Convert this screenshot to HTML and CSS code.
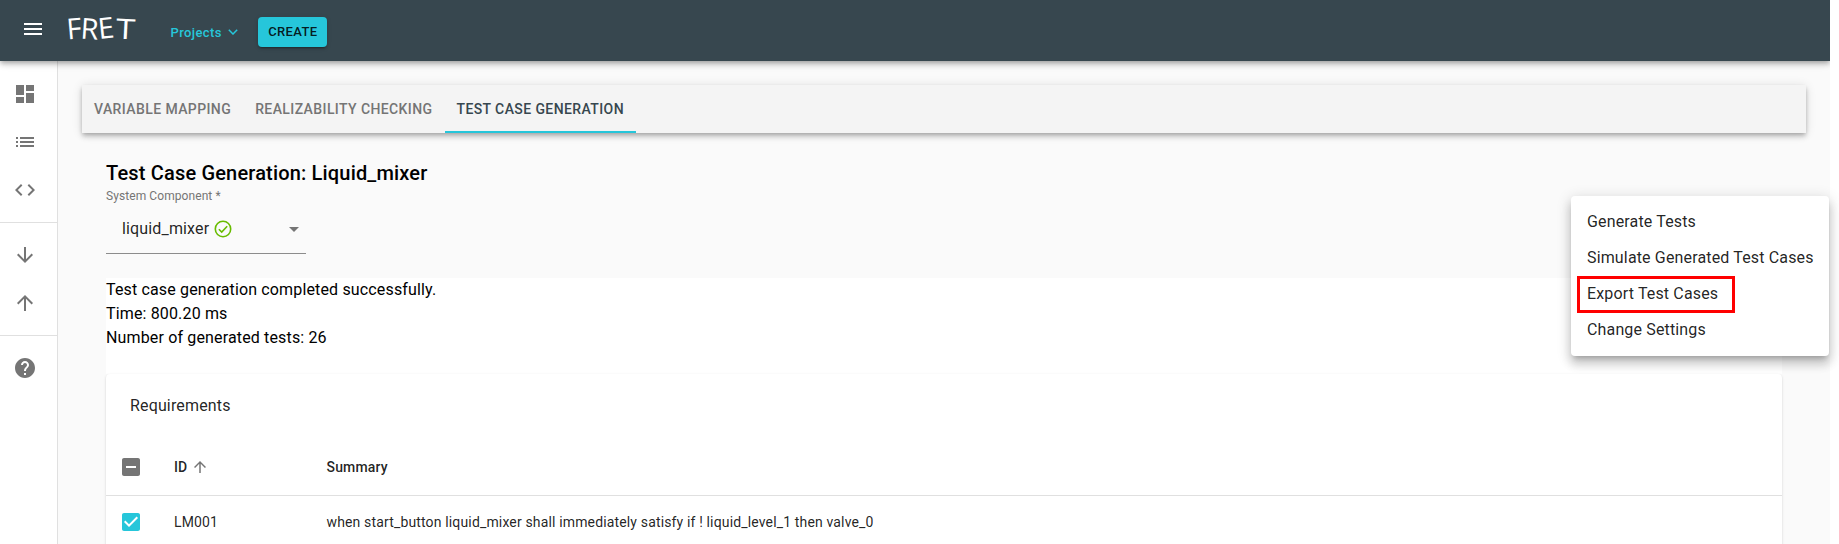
FILE: index.html
```html
<!DOCTYPE html>
<html lang="en">
<head>
<meta charset="utf-8">
<title>FRET</title>
<link rel="stylesheet" href="styles.css">
</head>
<body>
<div class="app">
  <header class="appbar">
    <svg class="icon menu-icon" viewBox="0 0 24 24"><path d="M3 18h18v-2H3v2zm0-5h18v-2H3v2zm0-7v2h18V6H3z"/></svg>
    <svg class="logo" viewBox="0 0 72 36"><text><tspan x="1.500" y="28.500" rotate="-5">F</tspan><tspan x="14" y="27.500" rotate="4">R</tspan><tspan x="33" y="28" rotate="-6">E</tspan></text><text class="wide" transform="translate(49.500 27.500) rotate(3) scale(1.250 1)">T</text></svg>
    <div class="projects">Projects<svg class="chevron" viewBox="0 0 10 6"><path d="M.8.8 5 5 9.200.8"/></svg></div>
    <button class="create">CREATE</button>
  </header>
  <div class="body">
    <nav class="sidebar">
      <div class="group">
        <svg class="icon" viewBox="0 0 24 24"><path d="M3 13h8V3H3v10zm0 8h8v-6H3v6zm10 0h8V11h-8v10zm0-18v6h8V3h-8z"/></svg>
        <svg class="icon" viewBox="0 0 24 24"><path d="M3 13h2v-2H3v2zm0 4h2v-2H3v2zm0-8h2V7H3v2zm4 4h14v-2H7v2zm0 4h14v-2H7v2zM7 7v2h14V7H7z"/></svg>
        <svg class="icon" viewBox="0 0 24 24"><path d="M9.400 16.600 4.800 12l4.600-4.600L8 6l-6 6 6 6 1.400-1.400zm5.200 0 4.600-4.600-4.600-4.600L16 6l6 6-6 6-1.400-1.400z"/></svg>
      </div>
      <div class="group">
        <svg class="icon" viewBox="0 0 24 24"><path d="m20 12-1.410-1.410L13 16.170V4h-2v12.170l-5.580-5.590L4 12l8 8 8-8z"/></svg>
        <svg class="icon" viewBox="0 0 24 24"><path d="m4 12 1.410 1.410L11 7.830V20h2V7.830l5.580 5.590L20 12l-8-8-8 8z"/></svg>
      </div>
      <div class="group">
        <svg class="icon" viewBox="0 0 24 24"><path d="M12 2C6.480 2 2 6.480 2 12s4.480 10 10 10 10-4.480 10-10S17.520 2 12 2zm1 17h-2v-2h2v2zm2.070-7.750-.9.920C13.450 12.900 13 13.500 13 15h-2v-.5c0-1.100.45-2.100 1.170-2.830l1.240-1.260c.37-.36.59-.86.59-1.410 0-1.100-.9-2-2-2s-2 .9-2 2H8c0-2.210 1.790-4 4-4s4 1.790 4 4c0 .88-.36 1.680-.93 2.250z"/></svg>
      </div>
    </nav>
    <main class="content">
      <div class="tabs">
        <div class="tab">VARIABLE MAPPING</div>
        <div class="tab">REALIZABILITY CHECKING</div>
        <div class="tab active">TEST CASE GENERATION</div>
      </div>
      <section class="panel">
        <h1 class="title">Test Case Generation: Liquid_mixer</h1>
        <div class="label">System Component *</div>
        <div class="select">
          <span>liquid_mixer</span>
          <svg class="ok" viewBox="0 0 18 18"><circle cx="9" cy="9" r="7.700"/><path d="m4.900 9.300 2.800 2.800L13.200 6.300"/></svg>
          <svg class="icon arrow" viewBox="0 0 24 24"><path d="m7 10 5 5 5-5z"/></svg>
        </div>
        <div class="result">
          <div>Test case generation completed successfully.</div>
          <div>Time: 800.20 ms</div>
          <div>Number of generated tests: 26</div>
        </div>
        <div class="card">
          <div class="toolbar">Requirements</div>
          <div class="row head">
            <svg class="icon check" viewBox="0 0 24 24"><path d="M19 3H5c-1.100 0-2 .9-2 2v14c0 1.100.9 2 2 2h14c1.100 0 2-.9 2-2V5c0-1.100-.9-2-2-2zm-2 10H7v-2h10v2z"/></svg>
            <div class="id">ID<svg class="icon sort" viewBox="0 0 24 24"><path d="m4 12 1.410 1.410L11 7.830V20h2V7.830l5.580 5.590L20 12l-8-8-8 8z"/></svg></div>
            <div>Summary</div>
          </div>
          <div class="row">
            <svg class="icon check on" viewBox="0 0 24 24"><path d="M19 3H5c-1.110 0-2 .9-2 2v14c0 1.100.89 2 2 2h14c1.110 0 2-.9 2-2V5c0-1.100-.89-2-2-2zm-9 14-5-5 1.410-1.410L10 14.170l7.590-7.590L19 8l-9 9z"/></svg>
            <div class="id">LM001</div>
            <div>when start_button liquid_mixer shall immediately satisfy if ! liquid_level_1 then valve_0</div>
          </div>
        </div>
      </section>
    </main>
  </div>
</div>
<div class="menu">
  <div class="item">Generate Tests</div>
  <div class="item">Simulate Generated Test Cases</div>
  <div class="item marked">Export Test Cases</div>
  <div class="item">Change Settings</div>
</div>
</body>
</html>
```
FILE: styles.css
```css
*, *::after { box-sizing: border-box; }
body {
  margin: 0;
  height: 544px;
  overflow: hidden;
  background: #fff;
  color: #000;
  font-family: Roboto, "Liberation Sans", sans-serif;
  font-size: 16px;
}
.app {
  width: 1830px;
  height: 544px;
  display: flex;
  flex-direction: column;
  overflow: hidden;
  background: #fafafa;
}
.icon { width: 24px; height: 24px; flex: none; fill: #757575; }
.appbar {
  position: relative;
  z-index: 1;
  flex: none;
  height: 61px;
  display: flex;
  align-items: center;
  padding: 0 21px 0 21px;
  background: #37474f;
  box-shadow: 0 2px 4px -1px rgba(0,0,0,.2), 0 4px 5px rgba(0,0,0,.14), 0 1px 10px rgba(0,0,0,.12);
}
.menu-icon { fill: #fff; margin-top: -3px; }
.logo { width: 72px; height: 36px; margin: -4px 0 0 21px; overflow: visible; }
.logo text { font-family: "Open Sans", sans-serif; font-size: 29px; fill: #fff; }
.logo .wide { font-size: 28px; }
.projects {
  display: flex;
  align-items: center;
  gap: 6px;
  margin-left: 32.500px;
  padding-top: 3px;
  color: #26c6da;
  font-size: 13px;
  font-weight: 500;
  letter-spacing: .4px;
}
.chevron { width: 10px; height: 6px; fill: none; stroke: #26c6da; stroke-width: 1.5; }
.create {
  width: 69px;
  height: 30px;
  margin: 2px 0 0 20.500px;
  padding: 0;
  border: 0;
  border-radius: 4px;
  background: #26c6da;
  color: rgba(0,0,0,.87);
  font: 500 13px Roboto, sans-serif;
  letter-spacing: .37px;
  box-shadow: 0 3px 1px -2px rgba(0,0,0,.2), 0 2px 2px rgba(0,0,0,.14), 0 1px 5px rgba(0,0,0,.12);
}
.body { flex: 1; display: flex; min-height: 0; }
.sidebar { width: 58px; flex: none; background: #fff; border-right: 1px solid #e0e0e0; }
.group {
  display: flex;
  flex-direction: column;
  gap: 24px;
  padding: 20px 0 20px 13px;
  border-bottom: 1px solid #e0e0e0;
}
.group:first-child { padding-top: 21px; }
.group:last-child { border-bottom: 0; }
.content { flex: 1; padding: 24px; }
.tabs {
  height: 48px;
  display: flex;
  background: #f4f4f4;
  box-shadow: 0 2px 4px -1px rgba(0,0,0,.2), 0 4px 5px rgba(0,0,0,.14), 0 1px 10px rgba(0,0,0,.12);
}
.tab {
  padding: 0 12px;
  color: #757575;
  font-size: 14px;
  font-weight: 500;
  line-height: 48px;
  letter-spacing: .4px;
}
.tab.active { color: #37474f; box-shadow: inset 0 -2px #26c6da; }
.panel { padding: 24px 24px 0; }
.title { margin: 0; font-size: 20px; font-weight: 500; line-height: 32px; letter-spacing: .17px; }
.label { height: 20px; color: #757575; font-size: 12px; line-height: 14px; letter-spacing: .08px; }
.select {
  width: 200px;
  height: 45px;
  display: flex;
  align-items: center;
  padding: 0 0 5px 16px;
  border-bottom: 1px solid #8c8c8c;
  color: rgba(0,0,0,.87);
  letter-spacing: .15px;
}
.ok { width: 18px; height: 18px; margin-left: 5px; fill: none; stroke: #68bc00; stroke-width: 1.6; }
.arrow { margin-left: auto; }
.result { height: 96px; margin-top: 24px; background: #fff; line-height: 24px; letter-spacing: .15px; }
.card {
  height: 200px;
  background: #fff;
  border-radius: 4px;
  color: rgba(0,0,0,.87);
  box-shadow: 0 2px 1px -1px rgba(0,0,0,.2), 0 1px 1px rgba(0,0,0,.14), 0 1px 3px rgba(0,0,0,.12);
}
.toolbar { height: 64px; padding-left: 24px; line-height: 63px; letter-spacing: .15px; }
.row { height: 52px; display: flex; align-items: center; padding-left: 13px; font-size: 14px; letter-spacing: .15px; }
.row.head { height: 58px; border-bottom: 1px solid #e0e0e0; font-weight: 500; }
.check { margin-right: 31px; }
.check.on { fill: #26c6da; }
.id { width: 152.500px; display: flex; align-items: center; }
.sort { width: 18px; height: 18px; margin-left: 4px; }
.menu {
  position: absolute;
  left: 1571px;
  top: 196px;
  width: 258px;
  height: 160px;
  padding: 8px 0;
  background: #fff;
  border-radius: 4px;
  white-space: nowrap;
  box-shadow: 0 5px 5px -3px rgba(0,0,0,.2), 0 8px 10px 1px rgba(0,0,0,.14), 0 3px 14px 2px rgba(0,0,0,.12);
}
.item { position: relative; padding: 6px 16px; line-height: 24px; letter-spacing: .15px; color: rgba(0,0,0,.87); }
.marked::after {
  content: "";
  position: absolute;
  left: 6px;
  top: 0;
  width: 158px;
  height: 37px;
  border: 3px solid #f00;
}
```
